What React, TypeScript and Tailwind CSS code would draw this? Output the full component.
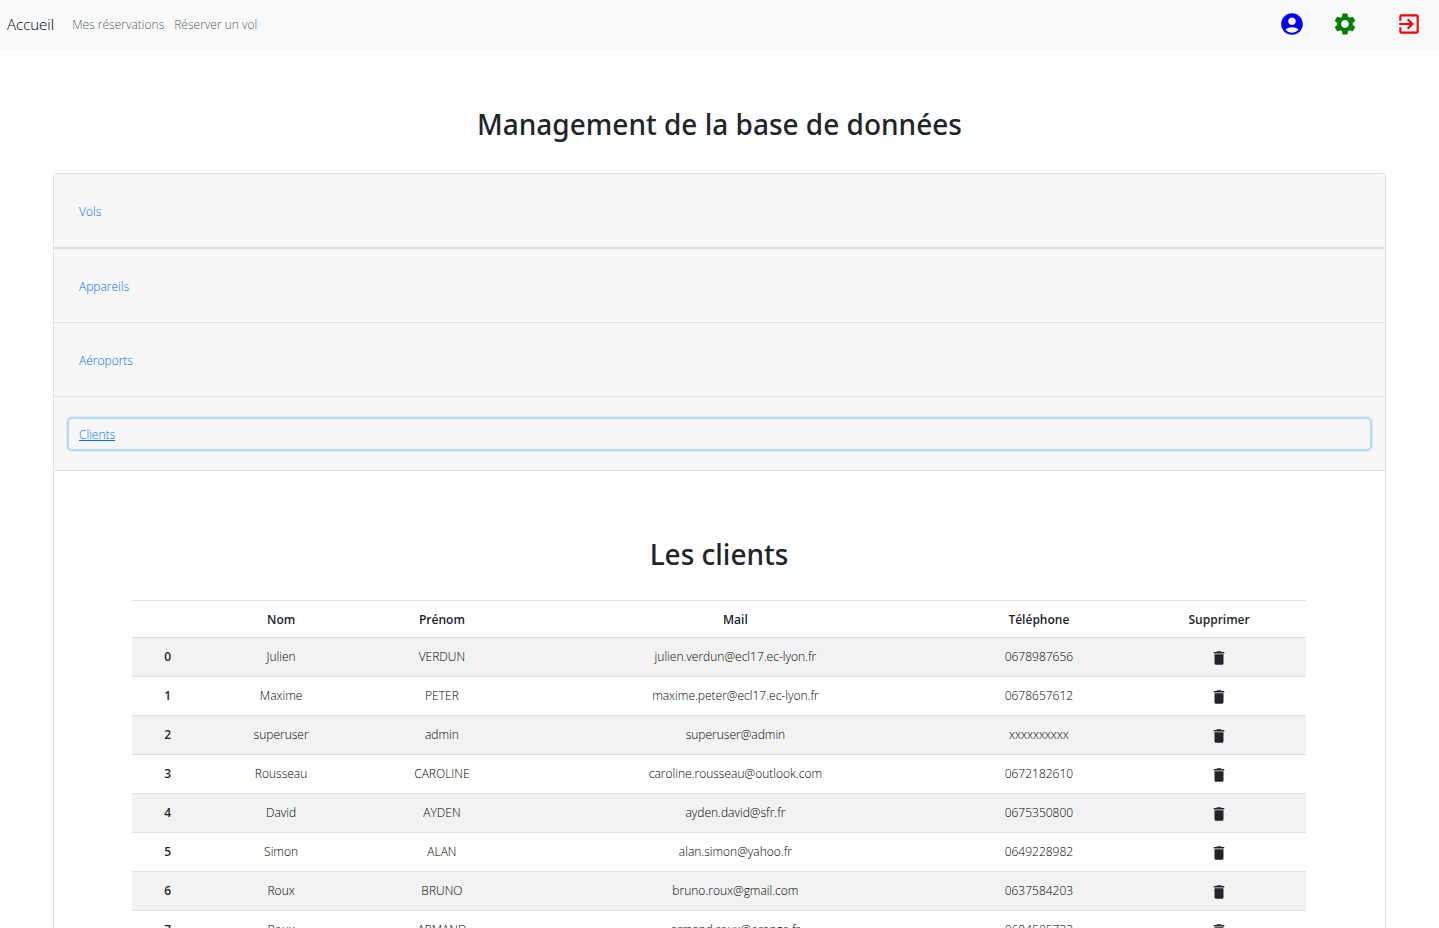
import React from 'react';
import { MdAccountCircle, MdSettings, MdExitToApp, MdDelete } from 'react-icons/md';

type Client = { nom: string; prenom: string; mail: string; telephone: string };

const clients: Client[] = [
  { nom: 'Julien', prenom: 'VERDUN', mail: 'julien.verdun@ecl17.ec-lyon.fr', telephone: '0678987656' },
  { nom: 'Maxime', prenom: 'PETER', mail: 'maxime.peter@ecl17.ec-lyon.fr', telephone: '0678657612' },
  { nom: 'superuser', prenom: 'admin', mail: 'superuser@admin', telephone: 'xxxxxxxxxx' },
  { nom: 'Rousseau', prenom: 'CAROLINE', mail: 'caroline.rousseau@outlook.com', telephone: '0672182610' },
  { nom: 'David', prenom: 'AYDEN', mail: 'ayden.david@sfr.fr', telephone: '0675350800' },
  { nom: 'Simon', prenom: 'ALAN', mail: 'alan.simon@yahoo.fr', telephone: '0649228982' },
  { nom: 'Roux', prenom: 'BRUNO', mail: 'bruno.roux@gmail.com', telephone: '0637584203' },
  { nom: 'Roux', prenom: 'ARMAND', mail: 'armand.roux@orange.fr', telephone: '0684505733' },
];

const sections = ['Vols', 'Appareils', 'Aéroports', 'Clients'];

function NavBar() {
  return (
    <nav className="flex h-[49px] items-center bg-[#f8f9fa] pl-[7px] pr-[17px]">
      <a href="#" className="mr-[18px] pb-[2px] text-[15px] font-light text-black">Accueil</a>
      <a href="#" className="mr-[10px] text-[12px] font-light text-black/70">Mes réservations</a>
      <a href="#" className="text-[12px] font-light text-black/70">Réserver un vol</a>
      <div className="ml-auto flex items-center pb-[2px]">
        <button type="button" aria-label="Profil" className="text-[#0000ff]"><MdAccountCircle size={26} /></button>
        <button type="button" aria-label="Paramètres" className="ml-[27px] text-[#008000]"><MdSettings size={26} /></button>
        <button type="button" aria-label="Déconnexion" className="ml-[38px] text-[#ff0000]"><MdExitToApp size={26} /></button>
      </div>
    </nav>
  );
}

function ClientsTable() {
  return (
    <table className="w-full table-fixed text-center">
      <colgroup>
        <col className="w-[6.1%]" />
        <col className="w-[13.2%]" />
        <col className="w-[14.2%]" />
        <col className="w-[35.8%]" />
        <col className="w-[15.9%]" />
        <col className="w-[14.8%]" />
      </colgroup>
      <thead>
        <tr className="h-[37px] border-y border-[#dee2e6]">
          <th className="pt-[2px]"></th>
          <th className="pt-[2px] font-semibold">Nom</th>
          <th className="pt-[2px] font-semibold">Prénom</th>
          <th className="pt-[2px] font-semibold">Mail</th>
          <th className="pt-[2px] font-semibold">Téléphone</th>
          <th className="pt-[2px] font-semibold">Supprimer</th>
        </tr>
      </thead>
      <tbody className="text-black">
        {clients.map((c, i) => (
          <tr key={i} className="h-[39px] border-t border-[#dee2e6] odd:bg-[#f2f2f2]">
            <th className="font-semibold text-[#212529]">{i}</th>
            <td>{c.nom}</td>
            <td>{c.prenom}</td>
            <td>{c.mail}</td>
            <td>{c.telephone}</td>
            <td>
              <button type="button" aria-label={'Supprimer ' + c.nom} className="mt-[2px] block w-full text-[#212529]">
                <MdDelete size={18} className="mx-auto" />
              </button>
            </td>
          </tr>
        ))}
      </tbody>
    </table>
  );
}

export default function App() {
  return (
    <div className="h-screen overflow-hidden bg-white font-['Open_Sans','Noto_Sans',sans-serif] text-[12px] font-light leading-[18px] text-[#212529]">
      <NavBar />
      <main className="px-[53px] pt-[56px]">
        <h1 className="mb-[30px] text-center font-['Noto_Sans',sans-serif] text-[28px] font-medium leading-[38px]">Management de la base de données</h1>
        <div className="rounded-t-[3px] border border-[#dfdfdf]">
          {sections.map((s, i) => {
            const active = s === 'Clients';
            return (
              <div
                key={s}
                className={
                  'flex items-center border-[#dfdfdf] bg-[#f7f7f7] px-[15px] ' +
                  (i === 0 ? 'h-[75px] border-b-2' : 'h-[74px] border-b')
                }
              >
                <button
                  type="button"
                  aria-expanded={active}
                  className={
                    'h-[30px] w-full rounded-[3px] px-[10px] pt-[2px] text-left text-[#006ff0] ' +
                    (active ? 'underline outline-none shadow-[0_0_0_2px_#b5d7fb,0_0_0_3px_#dfecf9]' : '')
                  }
                >
                  {s}
                </button>
              </div>
            );
          })}
          <section className="pl-[78px] pr-[79px] pt-[64px]">
            <h2 className="mb-[27px] text-center font-['Noto_Sans',sans-serif] text-[28px] font-medium leading-[38px]">Les clients</h2>
            <ClientsTable />
          </section>
        </div>
      </main>
    </div>
  );
}
